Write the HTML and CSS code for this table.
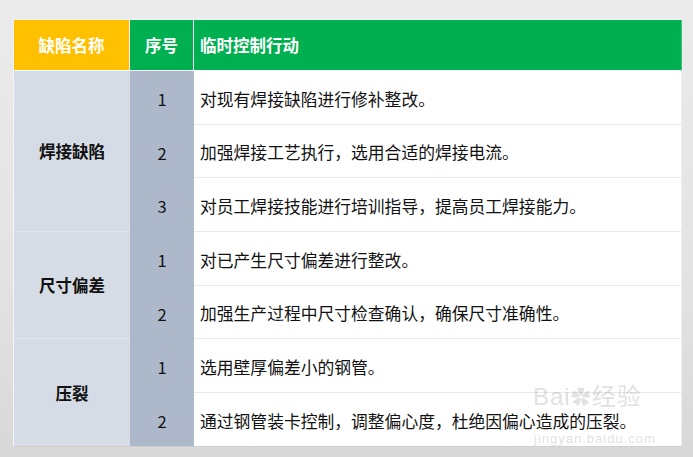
FILE: index.html
```html
<!DOCTYPE html>
<html lang="zh">
<head>
<meta charset="utf-8">
<link rel="stylesheet" href="styles.css">
</head>
<body>
<div class="sheet">
  <div class="table">
    <div class="hd hd-name">缺陷名称</div>
    <div class="hd hd-no">序号</div>
    <div class="hd hd-act">临时控制行动</div>

    <div class="grp g1">焊接缺陷</div>
    <div class="no r1">1</div><div class="act r1">对现有焊接缺陷进行修补整改。</div>
    <div class="no r2">2</div><div class="act r2">加强焊接工艺执行，选用合适的焊接电流。</div>
    <div class="no r3">3</div><div class="act r3">对员工焊接技能进行培训指导，提高员工焊接能力。</div>

    <div class="grp g2">尺寸偏差</div>
    <div class="no r4">1</div><div class="act r4">对已产生尺寸偏差进行整改。</div>
    <div class="no r5">2</div><div class="act r5">加强生产过程中尺寸检查确认，确保尺寸准确性。</div>

    <div class="grp g3">压裂</div>
    <div class="no r6">1</div><div class="act r6">选用壁厚偏差小的钢管。</div>
    <div class="no r7">2</div><div class="act r7 last">通过钢管装卡控制，调整偏心度，杜绝因偏心造成的压裂。</div>
  </div>
  <div class="watermark"><span class="wm-big">Bai<span class="paw">✿</span>经验</span><span class="wm-small">jingyan.baidu.com</span></div>
</div>
</body>
</html>
```

FILE: styles.css
```css
html, body {
  margin: 0;
  padding: 0;
}
body {
  width: 693px;
  height: 457px;
  overflow: hidden;
  background: linear-gradient(180deg, #ebebeb 0%, #e4e4e4 55%, #d8d8d8 100%);
  font-family: "Noto Sans CJK SC", "Noto Sans", sans-serif;
  color: #111;
}
.sheet {
  position: relative;
  padding: 19px 12px 0 13px;
}
.table {
  display: grid;
  grid-template-columns: 116px 64px 488px;
  grid-template-rows: 51px 54px 53px 54px 54px 53px 54px 53px;
  background: #fff;
  border: 1px solid #f4f4f4;
  border-right: none;
  border-bottom: none;
  box-sizing: border-box;
  width: 668px;
  box-shadow: 1px 1px 0 #cfcfcf;
}
.hd {
  display: flex;
  align-items: center;
  color: #fff;
  font-weight: 700;
  font-size: 16.5px;
  border-right: 1px solid #fff;
  border-bottom: 1px solid #fff;
}
.hd-name {
  background: #ffc000;
  justify-content: center;
}
.hd-no {
  background: #00b050;
  justify-content: center;
}
.hd-act {
  background: #00b050;
  padding-left: 6px;
  border-right: 1px solid #3cc37a;
}
.grp {
  grid-column: 1;
  background: #d6dce5;
  display: flex;
  align-items: center;
  justify-content: center;
  font-weight: 700;
  font-size: 16.5px;
  border-bottom: 1px solid #e4e8ee;
}
.g1 { grid-row: 2 / 5; }
.g2 { grid-row: 5 / 7; }
.g3 { grid-row: 7 / 9; border-bottom: none; }
.no {
  grid-column: 2;
  background: #adb9ca;
  display: flex;
  align-items: center;
  justify-content: center;
  font-size: 16.5px;
  padding-top: 2px;
  box-sizing: border-box;
}
.act {
  grid-column: 3;
  display: flex;
  align-items: center;
  padding-left: 6px;
  font-size: 16.8px;
  border-bottom: 1px solid #e9e9e9;
  border-right: 1px solid #f0f0f0;
  padding-top: 2px;
}
.act.last { border-bottom: none; }
.r1 { grid-row: 2; }
.r2 { grid-row: 3; }
.r3 { grid-row: 4; }
.r4 { grid-row: 5; }
.r5 { grid-row: 6; }
.r6 { grid-row: 7; }
.r7 { grid-row: 8; }
.watermark {
  position: absolute;
  left: 533px;
  top: 384px;
  display: flex;
  flex-direction: column;
  align-items: flex-start;
  color: rgba(150, 150, 150, 0.3);
  font-family: "Liberation Sans", "Noto Sans CJK SC", sans-serif;
  pointer-events: none;
}
.wm-big {
  font-size: 24px;
  line-height: 26px;
  letter-spacing: 1px;
}
.paw {
  font-size: 20px;
}
.wm-small {
  font-size: 13px;
  line-height: 14px;
  letter-spacing: 1px;
  margin-left: 1px;
  margin-top: 21px;
}
```
